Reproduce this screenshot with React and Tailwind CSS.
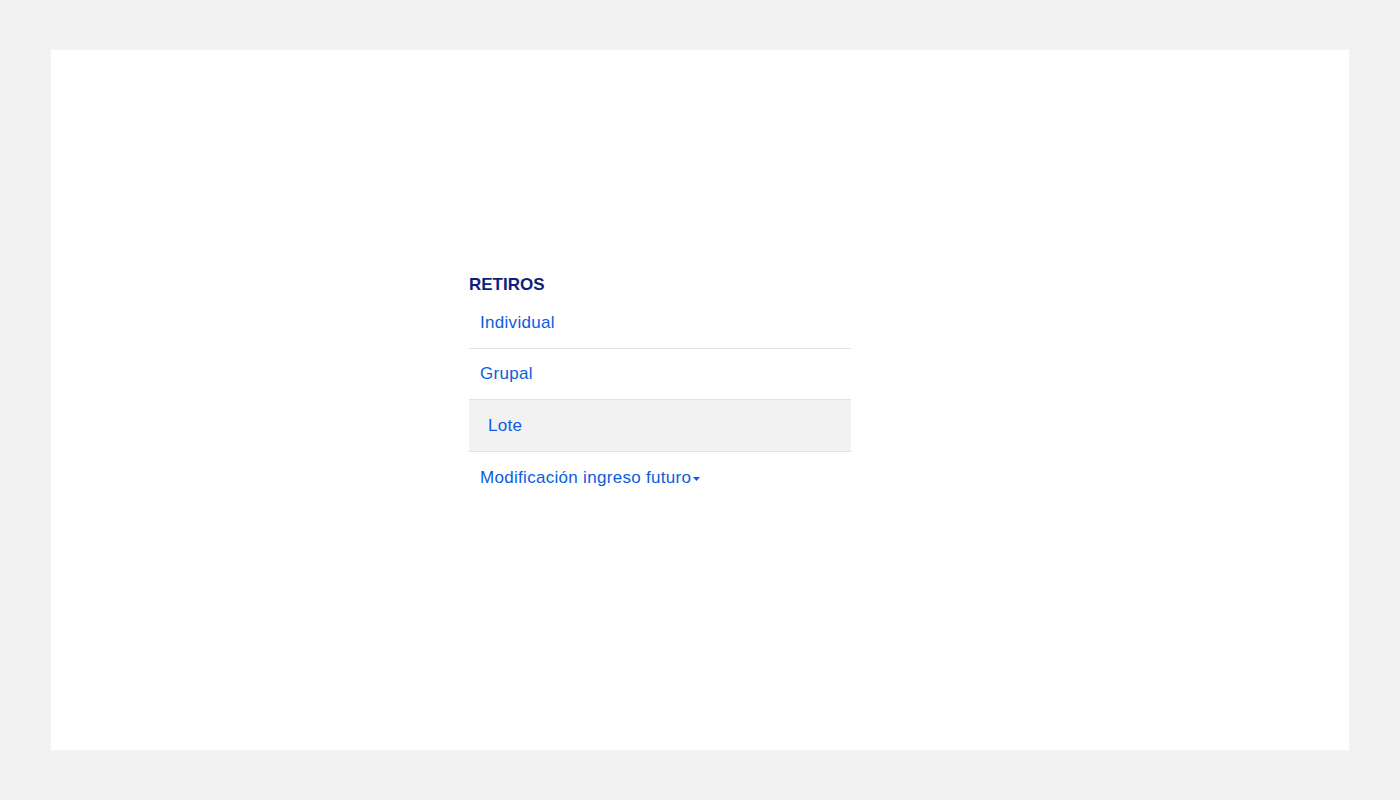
export default function App() {
    const items = ["Individual", "Grupal", "Lote", "Modificación ingreso futuro"];
    return (
        <div className="min-h-screen bg-[#f2f2f2] px-[51px] py-[50px] font-['Liberation_Sans',Arial,sans-serif]">
            <div className="h-[700px] bg-white pl-[418px] pt-[224px]">
                <div className="w-[382px]">
                    <h3 className="text-[17px] leading-[22px] font-bold text-[#0c1f7c] mb-[2px]">RETIROS</h3>
                    <ul>
                        {items.map((item, i) => (
                            <li
                                key={item}
                                className={
                                    "flex items-center text-[17px] tracking-[0.3px] text-[#0b5ce0] " +
                                    (i < items.length - 1 ? "border-b border-[#e2e2e2] " : "") +
                                    (item === "Lote" ? "h-[52px] bg-[#f2f2f2] pl-[19px]" : "h-[51px] pl-[11px]")
                                }
                            >
                                {item}
                                {i === items.length - 1 && (
                                    <svg width="9" height="6" viewBox="0 0 9 6" className="ml-[1px] mt-[3px]">
                                        <path d="M1 1 L8 1 L4.5 5 Z" fill="#0b5ce0" />
                                    </svg>
                                )}
                            </li>
                        ))}
                    </ul>
                </div>
            </div>
        </div>
    );
}
